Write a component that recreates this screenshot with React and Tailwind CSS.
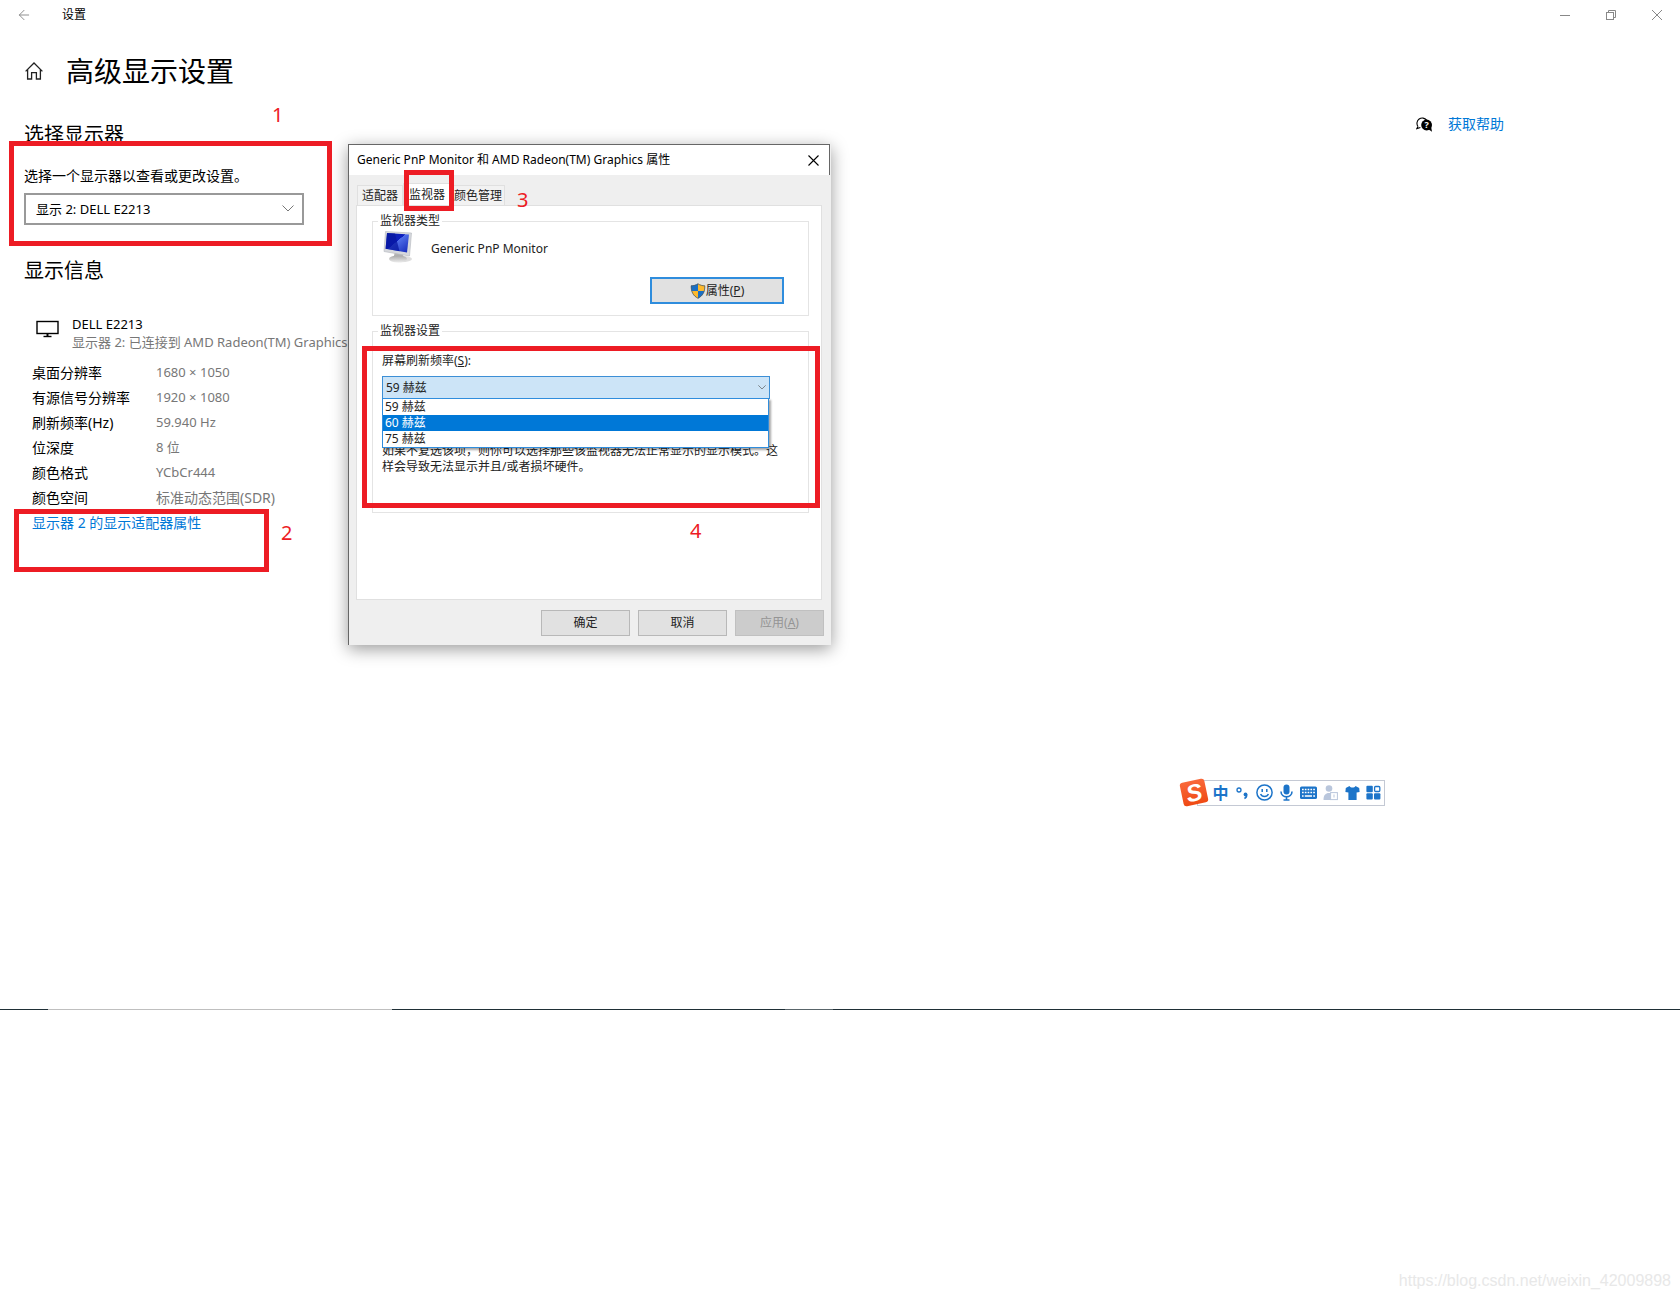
import { ArrowLeft } from 'lucide-react';

const displayInfo = [
  { label: '桌面分辨率', value: '1680 × 1050' },
  { label: '有源信号分辨率', value: '1920 × 1080' },
  { label: '刷新频率(Hz)', value: '59.940 Hz' },
  { label: '位深度', value: '8 位' },
  { label: '颜色格式', value: 'YCbCr444' },
  { label: '颜色空间', value: '标准动态范围(SDR)', wide: true },
];

const refreshRates = ['59 赫兹', '60 赫兹', '75 赫兹'];

function HomeIcon() {
  return (
    <svg width="20" height="18" viewBox="-1 0 20 18" fill="none" stroke="#222" strokeWidth="1.3">
      <path d="M0.6 9.4 L9 1 L17.4 9.4" />
      <path d="M2.6 7.6 V17 H6.6 V10.6 H11.4 V17 H15.4 V7.6" />
    </svg>
  );
}

function DisplayIcon() {
  return (
    <svg width="24" height="18" viewBox="0 0 24 18" fill="none" stroke="#000">
      <rect x="1" y="1.5" width="21" height="12" strokeWidth="1.4" />
      <path d="M11.5 14 V17" strokeWidth="2" />
      <path d="M7.5 16.5 H15.5" strokeWidth="1.4" />
    </svg>
  );
}

function HelpIcon() {
  return (
    <svg width="17" height="17" viewBox="0 0 17 17">
      <path d="M2 10.5 A5 5 0 1 1 10.6 4.2 M2 10.5 L0.8 12.6 L4.4 11.4" fill="none" stroke="#000" strokeWidth="1.1" />
      <circle cx="10.6" cy="9" r="5.4" fill="#000" />
      <path d="M12 13 L16 15.8 L15 10.6 Z" fill="#000" />
      <text x="10.6" y="12.2" fontSize="9" fontWeight="700" textAnchor="middle" fill="#fff">?</text>
    </svg>
  );
}

function MonitorIcon() {
  return (
    <svg width="32" height="34" viewBox="0 0 32 34">
      <defs>
        <linearGradient id="screen" x1="0" y1="0" x2="1" y2="1">
          <stop offset="0" stopColor="#0a1fa8" />
          <stop offset="0.45" stopColor="#0d1fc0" />
          <stop offset="0.46" stopColor="#4f6ee8" />
          <stop offset="1" stopColor="#1226b8" />
        </linearGradient>
        <linearGradient id="stand" x1="0" y1="0" x2="0" y2="1">
          <stop offset="0" stopColor="#a9a9a9" />
          <stop offset="1" stopColor="#ececec" />
        </linearGradient>
      </defs>
      <ellipse cx="18" cy="29" rx="11" ry="3.2" fill="#dedede" />
      <path d="M12 22 L20 24 L21 29 L10 29 Z" fill="#b5b5b5" />
      <ellipse cx="15" cy="29" rx="9" ry="3.4" fill="url(#stand)" />
      <path d="M2.5 1.5 L28.5 3 L26.5 26 L1 21.5 Z" fill="#d6d8dc" stroke="#b4b7bd" strokeWidth="0.6" />
      <path d="M4 3 L26 4.4 L24 22.6 L2.6 18.8 Z" fill="url(#screen)" />
      <path d="M4 3 L12 3.5 L16.5 21.3 L2.6 18.8 Z" fill="#0717a0" fillOpacity="0.75" />
    </svg>
  );
}

function ShieldIcon() {
  return (
    <svg width="16" height="16" viewBox="0 0 16 16">
      <defs>
        <clipPath id="shield">
          <path d="M8 0.5 C10 2 12.5 2.6 15 2.6 C15.2 8.8 13 13 8 15.6 C3 13 0.8 8.8 1 2.6 C3.5 2.6 6 2 8 0.5 Z" />
        </clipPath>
      </defs>
      <g clipPath="url(#shield)">
        <rect width="8" height="8" fill="#1a6fc4" />
        <rect x="8" width="8" height="8" fill="#fdb92c" />
        <rect y="8" width="8" height="8" fill="#fdb92c" />
        <rect x="8" y="8" width="8" height="8" fill="#1a6fc4" />
      </g>
      <path d="M8 0.8 C10 2.2 12.5 2.8 14.8 2.8 C15 8.8 12.8 12.8 8 15.3 C3.2 12.8 1 8.8 1.2 2.8 C3.5 2.8 6 2.2 8 0.8 Z" fill="none" stroke="#4a5a66" strokeWidth="0.8" />
    </svg>
  );
}

function Chevron({ className = '' }) {
  return (
    <svg className={className} viewBox="0 0 12 7" fill="none" stroke="currentColor">
      <path d="M0.5 0.5 L6 6 L11.5 0.5" />
    </svg>
  );
}

function WindowButtons() {
  return (
    <div className="flex text-[#888]">
      <button type="button" aria-label="最小化" className="flex h-[30px] w-[46px] items-center justify-center">
        <svg width="10" height="10" stroke="currentColor"><path d="M0 5.5 H10" /></svg>
      </button>
      <button type="button" aria-label="还原" className="flex h-[30px] w-[46px] items-center justify-center">
        <svg width="10" height="10" fill="none" stroke="currentColor">
          <rect x="0.5" y="2.5" width="7" height="7" />
          <path d="M2.5 2.5 V0.5 H9.5 V7.5 H7.5" />
        </svg>
      </button>
      <button type="button" aria-label="关闭" className="flex h-[30px] w-[46px] items-center justify-center">
        <svg width="10" height="10" stroke="currentColor"><path d="M0 0 L10 10 M10 0 L0 10" /></svg>
      </button>
    </div>
  );
}

function Settings() {
  return (
    <div>
      <header className="flex h-[30px] items-center justify-between">
        <div className="flex items-center">
          <button type="button" aria-label="返回" className="pr-[30px] pl-4 text-[#888]">
            <ArrowLeft size={16} strokeWidth={1.4} />
          </button>
          <span className="text-xs">设置</span>
        </div>
        <WindowButtons />
      </header>

      <div className="flex justify-between pl-6">
        <main>
          <div className="flex h-[82px] items-center gap-[22px]">
            <HomeIcon />
            <h1 className="text-[28px] leading-10">高级显示设置</h1>
          </div>

          <h2 className="mt-[7px] text-xl leading-8">选择显示器</h2>
          <label htmlFor="display" className="mt-[15px] block text-sm leading-5">
            选择一个显示器以查看或更改设置。
          </label>
          <div className="relative mt-[7px] w-[280px]">
            <select id="display" className="h-8 w-full appearance-none border-2 border-[#999] bg-white px-[10px] text-[13px] leading-5">
              <option>显示 2: DELL E2213</option>
            </select>
            <Chevron className="pointer-events-none absolute top-3 right-[10px] w-3 text-[#777]" />
          </div>

          <h2 className="mt-[30px] text-xl leading-8">显示信息</h2>
          <div className="mt-6 flex pl-3">
            <div className="w-9 pt-[9px]">
              <DisplayIcon />
            </div>
            <div className="pt-1 text-[13px] leading-[18px] whitespace-nowrap">
              <p>DELL E2213</p>
              <p className="text-[#777]">显示器 2: 已连接到 AMD Radeon(TM) Graphics</p>
            </div>
          </div>

          <table className="mt-[9px] ml-2 text-sm leading-[25px]">
            <tbody>
              {displayInfo.map((row) => (
                <tr key={row.label}>
                  <th scope="row" className="w-[124px] text-left font-normal">{row.label}</th>
                  <td className={row.wide ? 'text-sm leading-[25px] text-[#777]' : 'text-[13px] text-[#777]'}>{row.value}</td>
                </tr>
              ))}
            </tbody>
          </table>
          <a href="#adapter" className="ml-2 text-sm leading-[25px] text-[#0078d7]">显示器 2 的显示适配器属性</a>
        </main>

        <aside className="pt-[84px] pr-44">
          <a href="#help" className="flex items-center gap-[15px] text-sm leading-5 text-[#0078d7]">
            <HelpIcon />
            获取帮助
          </a>
        </aside>
      </div>
    </div>
  );
}

function GroupBox({ title, className, children }) {
  return (
    <fieldset className={'border border-[#e4e4e4] ' + className}>
      <legend className="ml-[5px] px-[2px] leading-4">{title}</legend>
      {children}
    </fieldset>
  );
}

function MonitorDialog() {
  return (
    <section
      role="dialog"
      aria-label="Generic PnP Monitor 和 AMD Radeon(TM) Graphics 属性"
      className="absolute top-36 left-[348px] w-[483px] border-l border-[#666] bg-[#efefef] text-xs text-[#222] shadow-[0_4px_16px_rgba(0,0,0,0.4)]"
    >
      <header className="mr-[1px] flex h-[31px] items-center justify-between border-t border-r border-[#666] bg-white pr-[10px] pl-2 text-black">
        <span>Generic PnP Monitor 和 AMD Radeon(TM) Graphics 属性</span>
        <button type="button" aria-label="关闭">
          <svg width="11" height="11" stroke="currentColor" strokeWidth="1.1"><path d="M0.5 0.5 L10.5 10.5 M10.5 0.5 L0.5 10.5" /></svg>
        </button>
      </header>

      <div className="px-[7px] pt-2 pb-[9px]">
        <div role="tablist" className="flex h-[22px] items-end leading-4">
          <button type="button" role="tab" className="ml-[1px] h-5 border border-b-0 border-[#e0e0e0] bg-[#f2f2f2] px-1">适配器</button>
          <button type="button" role="tab" aria-selected="true" className="h-[22px] border border-b-0 border-[#e0e0e0] bg-white px-[5px]">监视器</button>
          <button type="button" role="tab" className="h-5 border border-b-0 border-[#e0e0e0] bg-[#f2f2f2] px-[2px]">颜色管理</button>
        </div>

        <div role="tabpanel" className="mr-[2px] h-[395px] border border-[#e0e0e0] bg-white pt-[7px] pr-3 pl-[15px]">
          <GroupBox title="监视器类型" className="h-[103px]">
            <div className="flex items-start gap-4 pt-[1px] pl-[10px]">
              <MonitorIcon />
              <span className="pt-[11px] leading-4">Generic PnP Monitor</span>
            </div>
            <div className="mt-[13px] flex justify-end pr-6">
              <button type="button" className="flex h-[27px] w-[134px] items-center justify-center border-2 border-[#2f8ddd] bg-[#e1e1e1]">
                <ShieldIcon />
                <span>属性(<u>P</u>)</span>
              </button>
            </div>
          </GroupBox>

          <GroupBox title="监视器设置" className="mt-[7px] h-[190px]">
            <div className="pt-[14px] pr-6 pl-[9px]">
              <label htmlFor="rate" className="block leading-4">屏幕刷新频率(<u>S</u>):</label>
              <div className="relative mt-[7px] w-[388px]">
                <select id="rate" className="h-[23px] w-full appearance-none border border-[#3c8fd6] bg-[#cce4f7] px-[3px] leading-4">
                  <option>59 赫兹</option>
                </select>
                <Chevron className="pointer-events-none absolute top-[9px] right-1 w-2 text-[#555]" />
                <ul role="listbox" aria-label="屏幕刷新频率" className="absolute top-[22px] left-0 w-[387px] border border-[#2f8ddd] bg-white leading-4 shadow-[2px_2px_2px_rgba(0,0,0,0.35)]">
                  {refreshRates.map((rate) => (
                    <li
                      key={rate}
                      role="option"
                      aria-selected={rate === '60 赫兹'}
                      className={rate === '60 赫兹' ? 'bg-[#0078d7] px-[2px] text-white' : 'px-[2px]'}
                    >
                      {rate}
                    </li>
                  ))}
                </ul>
              </div>
              <p className="mt-11 leading-4">
                如果不复选该项，则你可以选择那些该监视器无法正常显示的显示模式。这样会导致无法显示并且/或者损坏硬件。
              </p>
            </div>
          </GroupBox>
        </div>

        <footer className="mt-[10px] flex justify-end gap-2">
          <button type="button" className="h-[26px] w-[89px] border border-[#b8b8b8] bg-[#e1e1e1]">确定</button>
          <button type="button" className="h-[26px] w-[89px] border border-[#b8b8b8] bg-[#e1e1e1]">取消</button>
          <button type="button" disabled className="h-[26px] w-[89px] border border-[#c0c0c0] bg-[#cccccc] text-[#949494]">应用(<u>A</u>)</button>
        </footer>
      </div>
    </section>
  );
}

function ImeBar() {
  return (
    <div className="absolute top-[778px] left-[1179px] flex items-center text-[#1c74c9]">
      <svg className="z-10" width="30" height="29" viewBox="0 0 30 29">
        <defs>
          <linearGradient id="ime" x1="0" y1="0" x2="0" y2="1">
            <stop offset="0" stopColor="#f9683a" />
            <stop offset="1" stopColor="#ef4a14" />
          </linearGradient>
        </defs>
        <g transform="rotate(-12 15 14.5)">
          <rect x="2.5" y="2.5" width="25" height="24" rx="3" fill="url(#ime)" />
          <text x="15" y="23" fontSize="24" fontWeight="700" fontStyle="italic" textAnchor="middle" fill="#fff" fontFamily="Liberation Sans, sans-serif">S</text>
        </g>
      </svg>
      <div className="-ml-3 flex h-[26px] items-center gap-[5px] border border-[#c4c9d4] bg-white pr-[3px] pl-[14px]">
        <span className="w-[17px] text-center text-base leading-4 font-bold">中</span>
        <svg width="17" height="17" viewBox="0 0 17 17" fill="none" stroke="currentColor">
          <circle cx="5" cy="6" r="2" strokeWidth="1.3" />
          <circle cx="11.5" cy="10.5" r="1.9" fill="currentColor" stroke="none" />
          <path d="M12.6 10.5 C12.8 12.6 12 13.8 10.4 14.4" strokeWidth="1.6" />
        </svg>
        <svg width="17" height="17" viewBox="0 0 17 17" fill="none" stroke="currentColor" strokeWidth="1.5">
          <circle cx="8.5" cy="8.5" r="7.6" />
          <path d="M6.2 5 V8 M10.8 5 V8" />
          <path d="M4.6 10 C6 13.4 11 13.4 12.4 10" />
        </svg>
        <svg width="17" height="17" viewBox="0 0 17 17" fill="none" stroke="currentColor" strokeWidth="1.6">
          <rect x="5.5" y="0.5" width="6" height="10" rx="3" fill="currentColor" stroke="none" />
          <path d="M3 7.5 C3 14.5 14 14.5 14 7.5 M8.5 12.8 V16 M5.5 16 H11.5" />
        </svg>
        <svg width="17" height="17" viewBox="0 0 17 17">
          <rect x="0" y="2.5" width="17" height="12.5" rx="1.6" fill="currentColor" />
          <path d="M2 5.5 H15 M2 8.5 H15" stroke="#fff" strokeWidth="1.5" strokeDasharray="1.7 1.1" />
          <path d="M2 11.9 H3.6 M4.8 11.9 H12 M13.2 11.9 H15" stroke="#fff" strokeWidth="1.5" />
        </svg>
        <svg width="17" height="17" viewBox="0 0 17 17" fill="#b9c6dc">
          <circle cx="7" cy="4.5" r="3.3" />
          <path d="M1.5 16 C1.5 11 3.5 9 7 9 H9 V16 Z" />
          <rect x="8.6" y="8.6" width="6.8" height="7" fill="#fff" stroke="#b9c6dc" />
          <path d="M12 10.5 V13.5" stroke="#b9c6dc" />
        </svg>
        <svg width="17" height="17" viewBox="0 0 17 17" fill="currentColor">
          <path d="M5.5 2 C6.5 4 10.5 4 11.5 2 L15.2 4 L15.6 8 L12.6 8.4 V16 H4.4 V8.4 L1.4 8 L1.8 4 Z" />
        </svg>
        <svg width="15" height="17" viewBox="1 0 15 17" fill="currentColor">
          <rect x="1.4" y="1.8" width="6.4" height="6.4" rx="1" />
          <rect x="9.6" y="2.5" width="5.2" height="5" rx="1" fill="none" stroke="currentColor" strokeWidth="1.3" />
          <rect x="1.4" y="9.2" width="6.4" height="6.4" rx="1" />
          <rect x="9" y="9.2" width="6.4" height="6.4" rx="1" />
        </svg>
      </div>
    </div>
  );
}

function Annotations() {
  return (
    <div className="pointer-events-none text-xl leading-6 text-[#ed1c24]">
      <div className="absolute top-[141px] left-[9px] h-[105px] w-[323px] border-5 border-[#ed1c24]" />
      <span className="absolute top-[103px] left-[272px]">1</span>
      <div className="absolute top-[509px] left-[14px] h-[63px] w-[255px] border-5 border-[#ed1c24]" />
      <span className="absolute top-[521px] left-[281px]">2</span>
      <div className="absolute top-[170px] left-[404px] h-[41px] w-[50px] border-5 border-[#ed1c24]" />
      <span className="absolute top-[188px] left-[517px]">3</span>
      <div className="absolute top-[346px] left-[362px] h-[162px] w-[458px] border-5 border-[#ed1c24]" />
      <span className="absolute top-[519px] left-[690px]">4</span>
    </div>
  );
}

export default function App() {
  return (
    <div className="relative flex min-h-screen flex-col bg-white font-['Noto_Sans','Noto_Sans_CJK_SC',sans-serif] text-black">
      <div className="min-h-[1009px]">
        <Settings />
      </div>
      <div className="flex h-px bg-[#1f2f36]">
        <div className="ml-12 w-[344px] bg-[#bfbfbf]" />
        <div className="ml-[393px] w-12 bg-[#59656a]" />
      </div>
      <footer className="mt-auto pr-[9px] pb-2 text-right font-['Liberation_Sans',sans-serif] text-base leading-5 text-[#e8e8e8]">
        https://blog.csdn.net/weixin_42009898
      </footer>

      <MonitorDialog />
      <ImeBar />
      <Annotations />
    </div>
  );
}
